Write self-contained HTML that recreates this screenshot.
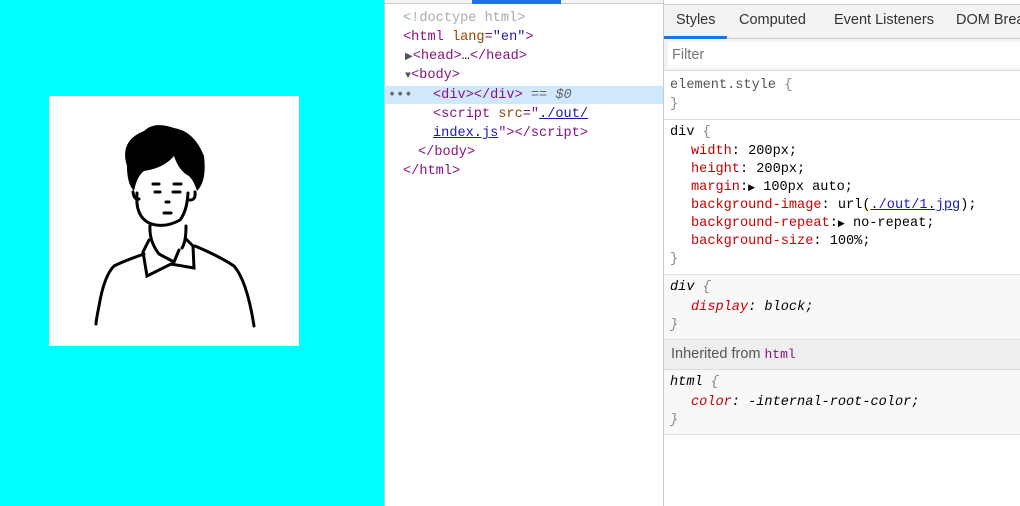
<!DOCTYPE html>
<html><head><style>
*{margin:0;padding:0;box-sizing:border-box}
body{width:1020px;height:506px;position:relative;overflow:hidden;background:#fff;font-family:"Liberation Mono",monospace;font-size:13.6px}
.abs{position:absolute}
.m{font-family:"Liberation Mono",monospace;font-size:13.6px;white-space:pre}
.tag{color:#881280}.at{color:#994500}.av{color:#1a1aa6}.gr{color:#aaa}
.ln{position:absolute;left:0;height:19px;line-height:19px;white-space:pre}
.p{color:#c80000}.v{color:#222}
.sl{position:absolute;left:6px;height:18px;line-height:18px;white-space:pre}
.pl{left:27px}
.sep{position:absolute;left:664px;width:356px;height:1px;background:#ddd}
.br{color:#888}
.tab{position:absolute;top:0}
</style></head><body>
<div class="abs" style="left:0;top:0;width:384px;height:506px;background:#00ffff"></div>
<div class="abs" style="left:49px;top:96px;width:250px;height:250px;background:#fff">
<svg width="250" height="250" viewBox="0 0 250 250">
<g fill="none" stroke="#000" stroke-width="3" stroke-linecap="round">
<path d="M88 97 Q86 120 100 127 Q115 133 131 124 Q138 115 139 97"/>
<path d="M84 96 Q85 104 90 103 M146 96 Q147 104 141 104"/>
<path d="M104 88 L110 88 M106 96 L111 96 M125 88 L132 88 M124 96 L131 96 M117 106 L120 106 M115 117 L122 117"/>
<path d="M101 130 Q100 145 110 158 M137 130 Q137 146 133 152 M110 158 L125 166 L130 154"/>
<path d="M100 144 L94 156 L98 180 L122 168 L145 172 L144 150 L137 143"/>
<path d="M95 158 Q75 165 65 170 Q55 180 50 210 Q47 225 47 228"/>
<path d="M146 150 Q170 160 185 170 Q198 185 205 230"/>
</g>
<path d="M78 70 Q70 45 95 35 Q105 25 125 32 Q145 35 155 60 Q158 85 148 95 Q145 85 140 80 Q130 75 125 60 Q115 72 95 75 Q88 80 85 95 Q78 88 78 70Z" fill="#000"/>
</svg></div>
<div class="abs" style="left:384px;top:0;width:1px;height:506px;background:#ccc"></div>
<div class="abs" style="left:385px;top:0;width:278px;height:4px;background:#f3f3f3;border-bottom:1px solid #ccc"></div>
<div class="abs" style="left:472px;top:0;width:89px;height:4px;background:#1a73e8"></div>
<div class="abs" style="left:385px;top:86px;width:278px;height:18px;background:#cfe8fc"></div>
<div class="abs m" style="left:385px;top:9px;width:278px">
<div class="ln" style="top:0;left:18px" ><span class="gr">&lt;!doctype html&gt;</span></div>
<div class="ln" style="top:19px;left:18px"><span class="tag">&lt;html </span><span class="at">lang</span><span class="tag">=</span><span class="av">"en"</span><span class="tag">&gt;</span></div>
<div class="ln" style="top:38px;left:20px"><span style="font-size:10px;color:#555">▶</span><span class="tag">&lt;head&gt;</span>…<span class="tag">&lt;/head&gt;</span></div>
<div class="ln" style="top:57px;left:20px"><span style="font-size:10px;color:#555">▼</span><span class="tag">&lt;body&gt;</span></div>
<div class="ln" style="top:77px;left:3px;color:#666">•••</div>
<div class="ln" style="top:77px;left:48px"><span class="tag">&lt;div&gt;&lt;/div&gt;</span><span style="color:#666"> == <i>$0</i></span></div>
<div class="ln" style="top:96px;left:48px"><span class="tag">&lt;script </span><span class="at">src</span><span class="tag">="</span><span class="av" style="text-decoration:underline">./out/</span></div>
<div class="ln" style="top:115px;left:48px"><span class="av" style="text-decoration:underline">index.js</span><span class="tag">"&gt;&lt;/script&gt;</span></div>
<div class="ln" style="top:134px;left:33px"><span class="tag">&lt;/body&gt;</span></div>
<div class="ln" style="top:153px;left:18px"><span class="tag">&lt;/html&gt;</span></div>
</div>
<div class="abs" style="left:663px;top:0;width:1px;height:506px;background:#ccc"></div>
<div class="abs" style="left:664px;top:4px;width:356px;height:35px;background:#f3f3f3;border-top:1px solid #ccc;border-bottom:1px solid #ccc"></div>
<div class="abs" style="left:664px;top:12px;width:356px;height:20px;font-family:'Liberation Sans',sans-serif;font-size:14.5px;color:#333;white-space:pre">
<span class="tab" style="left:12px">Styles</span><span class="tab" style="left:75px">Computed</span><span class="tab" style="left:170px">Event Listeners</span><span class="tab" style="left:292px">DOM Breakpoints</span></div>
<div class="abs" style="left:664px;top:36px;width:63px;height:3px;background:#1a73e8"></div>
<div class="abs" style="left:664px;top:39px;width:356px;height:32px;background:#f3f3f3;border-bottom:1px solid #ddd"></div>
<div class="abs" style="left:668px;top:42px;width:352px;height:26px;background:#fff;font-family:'Liberation Sans',sans-serif;font-size:14.5px;color:#777;padding:5px 4px">Filter</div>
<div class="abs m" style="left:664px;top:77px;width:356px;color:#222">
<div class="sl" style="top:0"><span style="color:#555">element.style </span><span class="br">{</span></div>
<div class="sl" style="top:19px"><span class="br">}</span></div>
</div>
<div class="sep" style="top:119px"></div>
<div class="abs m" style="left:664px;top:124px;width:356px">
<div class="sl" style="top:0">div <span class="br">{</span></div>
<div class="sl pl" style="top:19px"><span class="p">width</span>: 200px;</div>
<div class="sl pl" style="top:37px"><span class="p">height</span>: 200px;</div>
<div class="sl pl" style="top:55px"><span class="p">margin</span>:<span style="font-size:9px">▶</span> 100px auto;</div>
<div class="sl pl" style="top:73px"><span class="p">background-image</span>: url(<span class="av" style="text-decoration:underline">./out/1.jpg</span>);</div>
<div class="sl pl" style="top:91px"><span class="p">background-repeat</span>:<span style="font-size:9px">▶</span> no-repeat;</div>
<div class="sl pl" style="top:109px"><span class="p">background-size</span>: 100%;</div>
<div class="sl" style="top:127px"><span class="br">}</span></div>
</div>
<div class="sep" style="top:274px"></div>
<div class="abs" style="left:664px;top:275px;width:356px;height:64px;background:#f8f8f8"></div>
<div class="abs m" style="left:664px;top:279px;font-style:italic">
<div class="sl" style="top:0">div <span class="br">{</span></div>
<div class="sl pl" style="top:20px"><span class="p">display</span>: block;</div>
<div class="sl" style="top:38px"><span class="br">}</span></div>
</div>
<div class="sep" style="top:339px"></div>
<div class="abs" style="left:664px;top:340px;width:356px;height:29px;background:#eee;font-family:'Liberation Sans',sans-serif;font-size:14.5px;color:#555;padding:6px 7px">Inherited from <span class="tag m" style="font-size:13px">html</span></div>
<div class="sep" style="top:369px"></div>
<div class="abs" style="left:664px;top:370px;width:356px;height:64px;background:#f8f8f8"></div>
<div class="abs m" style="left:664px;top:374px;font-style:italic">
<div class="sl" style="top:0">html <span class="br">{</span></div>
<div class="sl pl" style="top:20px"><span class="p">color</span>: -internal-root-color;</div>
<div class="sl" style="top:38px"><span class="br">}</span></div>
</div>
<div class="sep" style="top:434px"></div>
</body></html>
